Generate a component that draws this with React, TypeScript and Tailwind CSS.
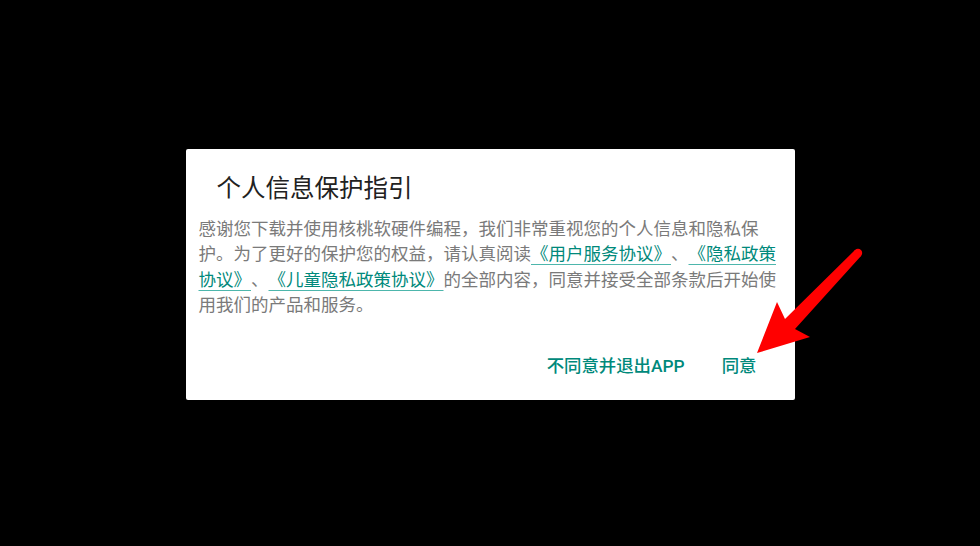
import React from "react"

const font = { fontFamily: 'Roboto, "Noto Sans CJK SC", sans-serif' }

function LinkText({ children }: { children: React.ReactNode }) {
    return (
        <span className="text-[#00897b] underline decoration-[#4db6ac] decoration-1 underline-offset-[4px]">
            {children}
        </span>
    )
}

function Arrow() {
    return (
        <svg
            className="pointer-events-none absolute inset-0"
            width="980"
            height="546"
            viewBox="0 0 980 546"
        >
            <circle cx="858" cy="253" r="4.2" fill="#ff0000" />
            <polygon
                fill="#ff0000"
                points="855,250 785,319 777,302 757,353 810,337 795,329 861,256"
            />
        </svg>
    )
}

export default function App() {
    return (
        <div
            className="relative flex h-[546px] w-[980px] items-center justify-center bg-black"
            style={font}
        >
            <div className="mt-[2px] flex h-[251px] w-[609px] flex-col rounded-[2px] bg-white px-[13px] pt-[25px]">
                <h1 className="pl-[18px] text-[24.5px] leading-[30px] font-normal text-[#212121]">
                    个人信息保护指引
                </h1>
                <p className="mt-[13px] whitespace-nowrap text-[17.5px] leading-[25.6px] text-[#7a7a7a] [text-spacing-trim:space-all]">
                    感谢您下载并使用核桃软硬件编程，我们非常重视您的个人信息和隐私保
                    <br />
                    护。为了更好的保护您的权益，请认真阅读<LinkText>《用户服务协议》</LinkText>、<LinkText>《隐私政策</LinkText>
                    <br />
                    <LinkText>协议》</LinkText>、<LinkText>《儿童隐私政策协议》</LinkText>的全部内容，同意并接受全部条款后开始使
                    <br />
                    用我们的产品和服务。
                </p>
                <div className="mt-auto flex items-center justify-end gap-[37px] pr-[25px] pb-[22px]">
                    <button className="text-[17.4px] leading-[24px] font-medium text-[#00897b]">
                        不同意并退出APP
                    </button>
                    <button className="text-[17.4px] leading-[24px] font-medium text-[#00897b]">
                        同意
                    </button>
                </div>
            </div>
            <Arrow />
        </div>
    )
}
